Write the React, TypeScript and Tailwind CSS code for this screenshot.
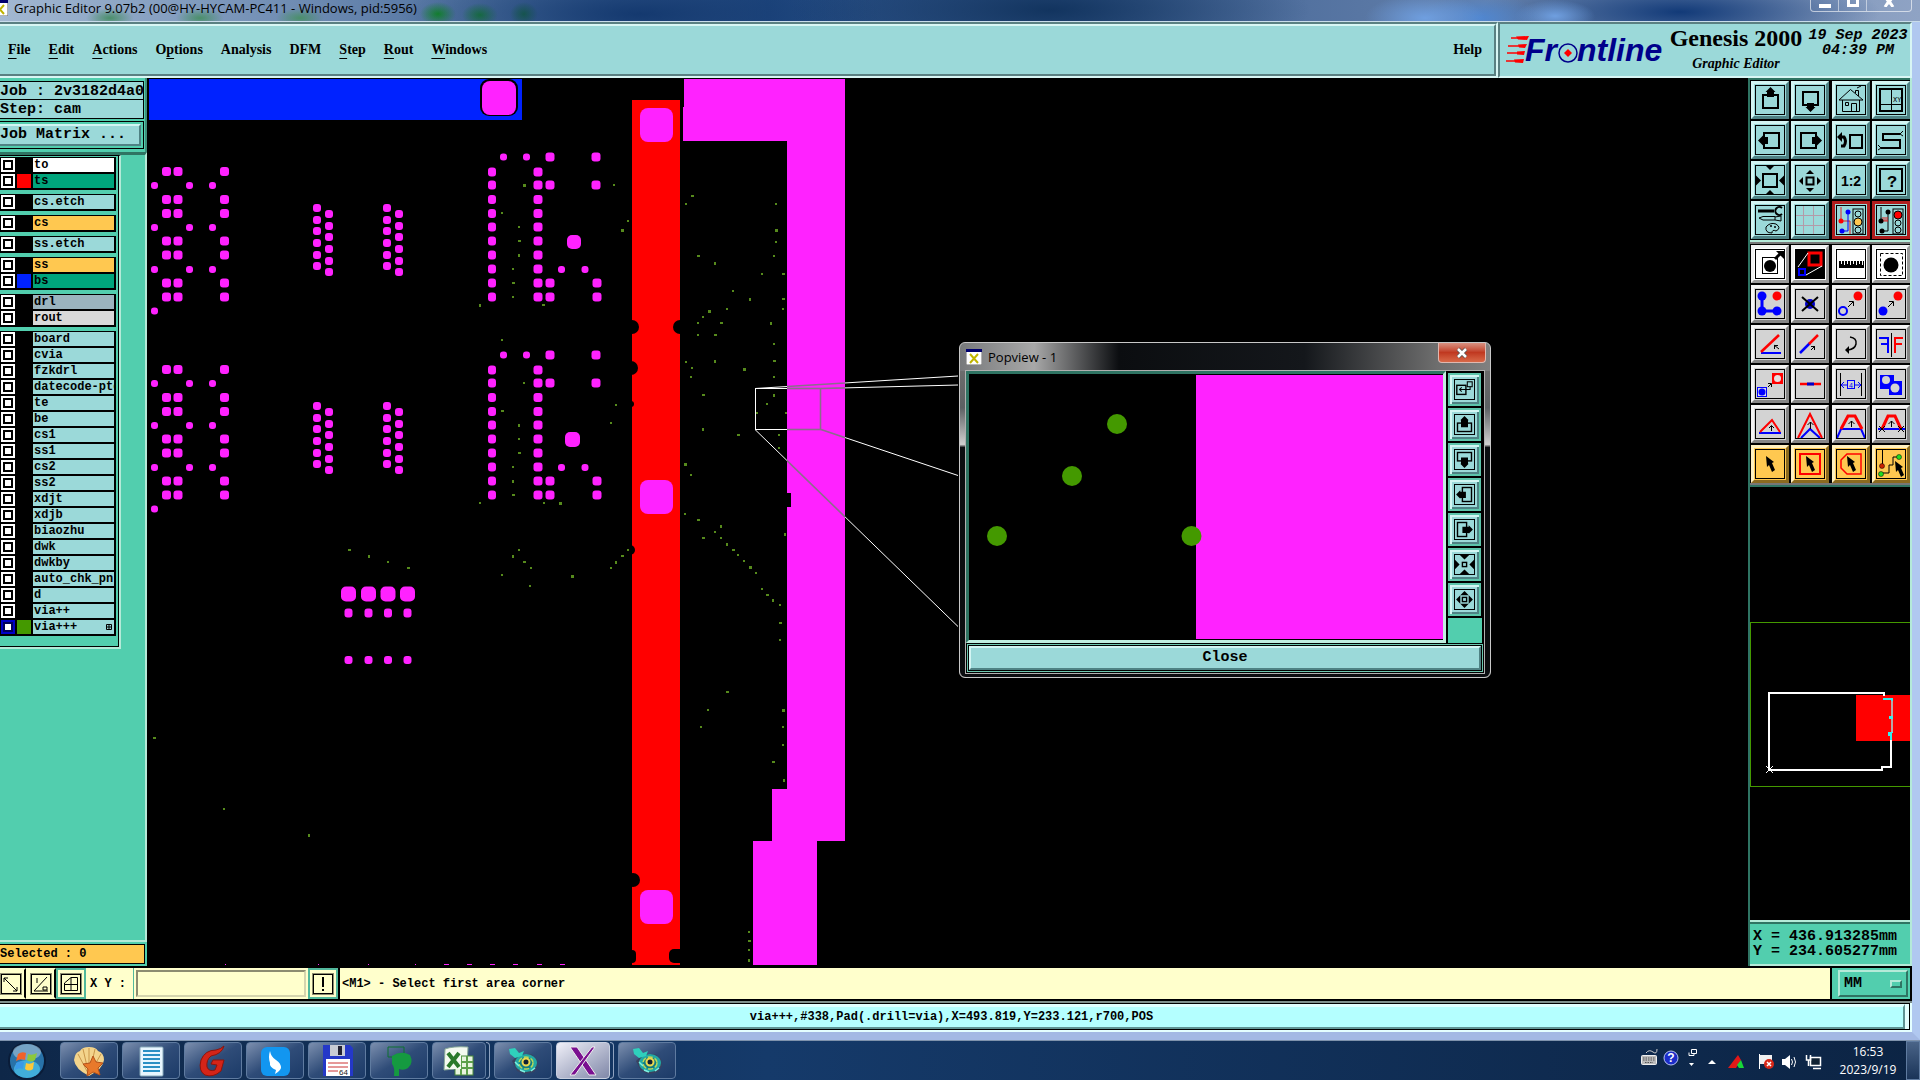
import React from "react";

const MONO = "font-['Liberation_Mono',monospace]";
const SERIF = "font-['Liberation_Serif',serif]";

/* ---------- board canvas data ---------- */
const ROWS_LARGE = [171.5, 199.5, 213.5, 241, 255, 283, 297];
const ROWS_SMALL = [185, 227, 269];
const ROWS_COLUMN = [172, 185, 199.5, 213.5, 227, 241, 255, 269, 283, 297];
const PADS_A = [208, 220, 231, 243, 255, 266];
const PADS_B = [214, 226, 237, 249, 261, 272];

const VIAS: number[][] = [
  [524, 185], [502, 213], [519, 227], [519, 241], [519, 255], [513, 269], [513, 283], [513, 297], [480, 305], [543, 305],
  [614, 185], [628, 221], [622, 230], [502, 340], [524, 383], [502, 411], [519, 425], [519, 439], [519, 453], [513, 467],
  [513, 481], [513, 495], [480, 503], [544, 503], [560, 503], [616, 405], [611, 423], [349, 550], [369, 556], [388, 562],
  [408, 568], [519, 550], [513, 556], [524, 562], [531, 568], [502, 575], [572, 576], [530, 586], [628, 550], [622, 556],
  [616, 562], [611, 568], [154, 738], [224, 809], [309, 835],
  [692, 196], [686, 204], [776, 204], [776, 230], [776, 242], [774, 256], [698, 256], [715, 263], [762, 274], [783, 274],
  [733, 291], [750, 299], [783, 299], [783, 309], [727, 309], [709, 311], [703, 317], [698, 323], [721, 323], [771, 323],
  [698, 335], [715, 335], [774, 344], [715, 361], [774, 361], [686, 362], [692, 368], [744, 369], [691, 377], [774, 377],
  [703, 395], [774, 395], [767, 404], [756, 413], [786, 413], [703, 429], [738, 435], [779, 435], [779, 448], [685, 464],
  [691, 475], [685, 514], [698, 520], [721, 526], [715, 532], [703, 538], [721, 538], [727, 544], [733, 550], [738, 555],
  [744, 561], [750, 567], [756, 573], [762, 589], [767, 595], [773, 600], [780, 605], [780, 623], [780, 640], [785, 534],
  [727, 692], [708, 710], [701, 727], [783, 710], [783, 727], [783, 745], [773, 762], [784, 780], [749, 932], [749, 941],
  [749, 950], [749, 960],
];

function Pad({ x, y, w, h, r }: { x: number; y: number; w: number; h: number; r: number }) {
  return <rect x={x - w / 2} y={y - h / 2} width={w} height={h} rx={r} fill="#ff22ff" />;
}

function PadBlock() {
  return (
    <>
      {[166.5, 178, 224.5].map((x) => ROWS_LARGE.map((y) => <Pad key={x + "-" + y} x={x} y={y} w={9} h={9} r={3} />))}
      {[154.5, 189.5, 212.5].map((x) => ROWS_SMALL.map((y) => <Pad key={x + "-" + y} x={x} y={y + 0.5} w={7} h={7} r={3} />))}
      <Pad x={154.5} y={311} w={7} h={7} r={3} />
      {[317, 387].map((x) => PADS_A.map((y) => <Pad key={x + "-" + y} x={x} y={y} w={8} h={8} r={3} />))}
      {[329, 399].map((x) => PADS_B.map((y) => <Pad key={x + "-" + y} x={x} y={y} w={8} h={8} r={3} />))}
      {[492, 538].map((x) => ROWS_COLUMN.map((y) => <Pad key={x + "-" + y} x={x} y={y} w={x === 492 ? 8 : 9} h={9} r={3} />))}
      {[[550, 157], [550, 185], [550, 283], [550, 297], [596, 157], [596, 185], [597, 283], [597, 297]].map(([x, y]) => (
        <Pad key={x + "-" + y} x={x} y={y} w={9} h={9} r={3} />
      ))}
      {[[503.5, 157], [526.5, 157], [561.5, 269.5], [585, 269.5]].map(([x, y]) => (
        <Pad key={x + "-" + y} x={x} y={y} w={7} h={7} r={3} />
      ))}
    </>
  );
}

function Leads({ color, width }: { color: string; width: number }) {
  return (
    <g fill="none" stroke={color} strokeWidth={width}>
      <rect x="755.5" y="388.5" width="65" height="41" />
      <path d="M755 388.5 L958 376 M821 388.5 L958 385 M821 429.5 L958 475.5 M755 429.5 L958 626.5" />
    </g>
  );
}

function BoardCanvas() {
  return (
    <svg viewBox="147 78 1602 887" width="1602" height="887" className="block max-w-none" aria-label="Board view">
      <rect x="149" y="79" width="373" height="41" fill="#0022ff" />
      <rect x="480" y="79" width="38" height="37" rx="9" fill="#000" />
      <rect x="482" y="81" width="34" height="34" rx="8" fill="#ff22ff" />
      <PadBlock />
      <g transform="translate(0 198)"><PadBlock /></g>
      <Pad x={574} y={242} w={14} h={14} r={5} />
      <Pad x={572.5} y={439.5} w={15} h={15} r={5} />
      {[348.5, 368.5, 388, 407.5].map((x) => (
        <g key={x}>
          <Pad x={x} y={594} w={15} h={15} r={5} />
          <Pad x={x} y={613} w={8} h={9} r={3} />
          <Pad x={x} y={660} w={8} h={8} r={3} />
        </g>
      ))}
      <rect x="632" y="100" width="48" height="865" fill="#f00" />
      {[108, 480, 890].map((y) => <rect key={y} x="640" y={y} width="33" height="34" rx="8" fill="#ff22ff" />)}
      <g fill="#000">
        <circle cx="632" cy="327" r="7" /><circle cx="680" cy="327" r="7" /><circle cx="631" cy="368" r="7" />
        <circle cx="631" cy="404" r="3" /><circle cx="630" cy="550" r="5" /><circle cx="633" cy="880" r="7" />
        <rect x="626" y="950" width="10" height="13" rx="4" /><rect x="669" y="949" width="18" height="14" rx="5" />
      </g>
      <path d="M684 79H845V841H817V965H753V841H772V789H787V507H791V493H787V141H683V107H684Z" fill="#ff22ff" />
      {VIAS.map(([x, y], i) => <rect key={i} x={x - 1} y={y - 1} width={i % 3 === 0 ? 3 : 2} height={i % 4 === 0 ? 3 : 2} fill="#568a1c" />)}
      {[225, 318, 368, 415].map((x) => <rect key={x} x={x} y="964" width="1" height="1" fill="#ff22ff" />)}
      {[444, 467, 490, 513, 537, 560].map((x) => <rect key={x} x={x} y="964" width="5" height="1" fill="#ff22ff" />)}
      <clipPath id="onCopper"><path d="M787 79H845V841H787V507H791V493H787Z" /></clipPath>
      <Leads color="#fff" width={1} />
      <g clipPath="url(#onCopper)">
        <Leads color="#ff22ff" width={3} />
        <Leads color="#8c6c8c" width={1.6} />
      </g>
    </svg>
  );
}

/* ---------- tool icons, drawn on a 30 x 30 grid ---------- */
const up = (x: number, y: number, s: number) => `M${x} ${y}l${s} ${s}h${-2 * s}z`;
const down = (x: number, y: number, s: number) => `M${x} ${y}l${s} ${-s}h${-2 * s}z`;
const left = (x: number, y: number, s: number) => `M${x} ${y}l${s} ${-s}v${2 * s}z`;
const right = (x: number, y: number, s: number) => `M${x} ${y}l${-s} ${-s}v${2 * s}z`;

const Box = ({ x, y, w, h, sw = 2 }: { x: number; y: number; w: number; h: number; sw?: number }) => (
  <rect x={x} y={y} width={w} height={h} fill="none" stroke="#000" strokeWidth={sw} />
);
const Cursor = ({ x, y }: { x: number; y: number }) => (
  <path transform={`translate(${x} ${y})`} d="M0 0L8 6L6 7L9 14L6 16L3 9L1 11Z" fill="#000" />
);
const SmallArrow = ({ d, a }: { d: string; a: string }) => (
  <><path d={d} stroke="#000" fill="none" /><path d={a} stroke="#000" fill="none" /></>
);

type Tool = { name: string; art: React.ReactNode };

const viewTools: Tool[] = [
  { name: "Pan up", art: <><Box x={8} y={10} w={15} h={13} /><path d={up(15.5, 2, 5) + "M12 7h7v5h-7z"} /></> },
  { name: "Pan down", art: <><Box x={8} y={7} w={15} h={13} /><path d={down(15.5, 27, 5) + "M12 18h7v4h-7z"} /></> },
  { name: "Home", art: <g fill="none" stroke="#000"><path d="M3 15L14.500 4.500L27 15H3M6.500 15V26.500H23.500V15M19.500 8V5.500H22.500V11M21 3L25 1M9.500 17.500h3v3h-3zM15.500 26V18.500H20.500V26" /></g> },
  { name: "Zoom XY", art: <><Box x={4} y={4} w={22} h={22} /><path d="M15.500 4V26M4 19.500H26" stroke="#000" /><text x="17" y="17" fontSize="7" fontFamily="Liberation Mono">XY</text></> },
  { name: "Pan left", art: <><Box x={9} y={8} w={15} h={15} /><path d={left(3, 15.5, 5) + "M8 12h5v7h-5z"} /></> },
  { name: "Pan right", art: <><Box x={6} y={8} w={15} h={15} /><path d={right(27, 15.5, 5) + "M17 12h5v7h-5z"} /></> },
  { name: "Previous view", art: <><Box x={14} y={10} w={12} h={13} /><path d="M5 12H8Q11 16 8 21H5" fill="none" stroke="#000" strokeWidth="3" /><path d={left(1, 12, 5)} /></> },
  { name: "Serpentine", art: <><path d="M24 9H7V15H24V23H5" fill="none" stroke="#000" strokeWidth="2" /><path d="M24 9l3-3M24 9l3 2M5 23l-3-3M5 23l-3 2" stroke="#000" /></> },
  { name: "Zoom in", art: <><Box x={8} y={9} w={14} h={13} /><path d={down(15, 5, 4) + up(15, 25, 4) + right(6, 15.5, 5) + left(24, 15.5, 5)} /></> },
  { name: "Zoom out", art: <><Box x={11.5} y={12.5} w={7} h={7} /><path d={up(15, 5, 4) + down(15, 27, 4) + left(4, 16, 4) + right(26, 16, 4)} /></> },
  { name: "Scale one to two", art: <text x="15" y="21" textAnchor="middle" fontSize="14" fontWeight="bold" fontFamily="Liberation Sans">1:2</text> },
  { name: "Query", art: <><Box x={4} y={4} w={22} h={22} /><text x="16" y="22" textAnchor="middle" fontSize="17" fontWeight="bold" fontFamily="Liberation Mono">?</text></> },
  { name: "Options", art: <g><path d="M3 6H19" stroke="#000" strokeWidth="3" /><path d="M27 3A4 4 0 1 0 27 9" fill="none" stroke="#000" strokeWidth="2" /><path d="M4 13L8 11.500H20V15H8ZM20 12l6-1v5l-6-1" fill="none" stroke="#000" /><path d="M11 22Q15 17 21 19Q27 23 21 26Q17 24 17 28Q10 28 11 22Z" fill="none" stroke="#000" /><circle cx="16" cy="21" r="1" /><circle cx="20" cy="22" r="1" /></g> },
  { name: "Grid", art: <path d="M8.500 1V29M18.500 1V29M1 10.500H29M1 20.500H29" stroke="#b39aa8" /> },
  { name: "Net warnings", art: <g><path d="M5 2V16H14V29" stroke="#d22" fill="none" /><path d="M12 7V26H6" stroke="#00f" fill="none" /><circle cx="5" cy="16" r="2.500" fill="#f00" /><circle cx="12" cy="7" r="2.500" fill="#00f" /><circle cx="6" cy="26" r="2.500" fill="#00f" /><rect x="17" y="4" width="10" height="25" fill="none" stroke="#000" /><circle cx="22" cy="9" r="3" fill="#9bd9d9" stroke="#000" /><circle cx="22" cy="17" r="4" fill="#ffc850" stroke="#000" /><circle cx="22" cy="25" r="3" fill="#9bd9d9" stroke="#000" /></g> },
  { name: "Net errors", art: <g><path d="M5 2V16M12 7V26H6" stroke="#000" fill="none" /><path d="M5 16H12M7 12v4M9 12v4M11 12v4" stroke="#d22" /><circle cx="5" cy="16" r="2.500" /><circle cx="12" cy="7" r="2.500" /><circle cx="6" cy="26" r="2.500" /><rect x="17" y="4" width="10" height="25" fill="none" stroke="#000" /><circle cx="22" cy="10" r="4" fill="#f00" stroke="#000" /><circle cx="22" cy="18" r="3" fill="#9bd9d9" stroke="#000" /><circle cx="22" cy="25" r="3" fill="#9bd9d9" stroke="#000" /></g> },
];

const whiteTools: Tool[] = [
  { name: "Snap", art: <><Box x={7.5} y={8.5} w={15} h={16} sw={1} /><circle cx="15" cy="17" r="6" /><path d="M20 10L25 5" stroke="#000" strokeWidth="3" /><path d="M21 2H29V10Z" /></> },
  { name: "Popview", art: <><rect width="30" height="30" /><rect x="14" y="4" width="12" height="12" fill="none" stroke="#f00" strokeWidth="3" /><rect x="4" y="20" width="6" height="6" fill="none" stroke="#00f" strokeWidth="2" /><path d="M3 18L13 4M11 26L27 17" stroke="#fff" /></> },
  { name: "Measure", art: <><rect x="3" y="12" width="25" height="7" /><path d="M5.500 12v3M8.500 12v4M11.500 12v3M14.500 12v4M17.500 12v3M20.500 12v4M23.500 12v3M26.500 12v4" stroke="#fff" /></> },
  { name: "Highlight", art: <><rect x="4.500" y="4.500" width="22" height="22" fill="none" stroke="#000" strokeDasharray="3 2" /><circle cx="15" cy="16" r="7.500" /></> },
];

const editTools: Tool[] = [
  { name: "Add feature", art: <><path d="M7 7V22H22" fill="none" stroke="#00f" strokeWidth="3" /><circle cx="7" cy="7" r="4.500" fill="#00f" /><circle cx="7" cy="22" r="4.500" fill="#00f" /><circle cx="22" cy="22" r="4.500" fill="#00f" /><circle cx="22" cy="7" r="4.500" fill="#f00" /></> },
  { name: "Delete", art: <><circle cx="15" cy="15" r="5" fill="#00c" /><path d="M7 8L23 22M7 22L23 8" stroke="#000" strokeWidth="2" /></> },
  { name: "Move", art: <><circle cx="7" cy="22" r="4" fill="none" stroke="#00f" strokeWidth="2" /><circle cx="22" cy="7" r="4.500" fill="#f00" /><SmallArrow d="M12 18L17 13" a="M13 12.500H17.500V17" /></> },
  { name: "Copy", art: <><circle cx="7" cy="22" r="4.500" fill="#00f" /><circle cx="22" cy="7" r="4.500" fill="#f00" /><SmallArrow d="M12 18L17 13" a="M13 12.500H17.500V17" /></> },
  { name: "Rotate line", art: <><path d="M6 24H26" stroke="#00f" strokeWidth="2" /><path d="M6 23L24 6" stroke="#f00" strokeWidth="2.500" /><SmallArrow d="M19 16L24 20" a="M19.500 20V16.500H23" /></> },
  { name: "Stretch line", art: <><path d="M5 24L15 14" stroke="#00f" strokeWidth="2.500" /><path d="M14 15L23 6" stroke="#f00" strokeWidth="2.500" /><SmallArrow d="M16 21L20 17" a="M16 17.500H19.500V21" /></> },
  { name: "Rotate", art: <><path d="M14 8Q21 9 20 15Q19 20 12 21" fill="none" stroke="#000" strokeWidth="1.500" /><path d={left(9, 21, 4)} /></> },
  { name: "Mirror", art: <><path d="M3 9H12V24M12 15H5" fill="none" stroke="#00f" strokeWidth="2" /><path d="M15.500 4V28" stroke="#000" /><path d="M27 9H19V24M19 15H26" fill="none" stroke="#f00" strokeWidth="2" /></> },
  { name: "Resize", art: <><rect x="18" y="5" width="9" height="9" fill="#f00" stroke="#f00" strokeWidth="2" /><circle cx="22.500" cy="9.500" r="3.500" fill="#e8e0e0" /><rect x="2.500" y="18.500" width="9" height="9" fill="#d8d8e8" stroke="#00f" /><circle cx="7" cy="23" r="3.500" fill="#00f" /><SmallArrow d="M13 18L16 15" a="M13 14.500H16.500V18" /></> },
  { name: "Join", art: <><path d="M5 15H26" stroke="#f00" strokeWidth="2.500" /><path d="M12 15H19" stroke="#00c" strokeWidth="3" /></> },
  { name: "Spacing", art: <><path d="M4.500 4V27M25.500 4V27" stroke="#000" /><rect x="11.500" y="11.500" width="7" height="8" fill="none" stroke="#00f" /><text x="13" y="18.500" fontSize="7" fill="#00f" fontFamily="Liberation Sans">4</text><path d="M5 16H11M19 16H25M8 13l-3 3l3 3M22 13l3 3l-3 3" fill="none" stroke="#00f" /></> },
  { name: "Merge", art: <><rect x="4" y="6" width="14" height="14" fill="#00f" /><rect x="13" y="12" width="13" height="14" fill="#00f" /><circle cx="10" cy="11" r="4" fill="#d3d3d3" /><circle cx="19" cy="19" r="4.500" fill="#d3d3d3" /></> },
  { name: "Triangle", art: <><path d="M4 24H26" stroke="#00f" strokeWidth="2" /><path d="M5 23L17 11L25 23" fill="none" stroke="#f00" strokeWidth="2" /><SmallArrow d="M16.500 22V17" a="M14 19l2.500-2.500l2.500 2.500" /></> },
  { name: "Move corner", art: <><path d="M6 29L15 20L25 29" fill="none" stroke="#00f" strokeWidth="2" /><path d="M3 29L15 5L27 29" fill="none" stroke="#f00" strokeWidth="2" /><SmallArrow d="M15.500 20V13" a="M12.500 16l3-3l3 3" /></> },
  { name: "Move edge", art: <><path d="M1 29L5 20H25L29 29" fill="none" stroke="#00f" strokeWidth="2" /><path d="M5 20L12 7H19L26 20" fill="none" stroke="#f00" strokeWidth="3" /><SmallArrow d="M15.500 18V12" a="M12.500 15l3-3l3 3" /></> },
  { name: "Move edge fixed", art: <><path d="M2 20H29" stroke="#00f" strokeWidth="2" /><path d="M6 20L12 7H19L25 20" fill="none" stroke="#f00" strokeWidth="3" /><path d="M3 17l6 6M3 23l6-6M22 17l6 6M22 23l6-6" stroke="#000" /><SmallArrow d="M15.500 18V12" a="M12.500 15l3-3l3 3" /></> },
];

const selectTools: Tool[] = [
  { name: "Select", art: <Cursor x={11} y={7} /> },
  { name: "Select rectangle", art: <><rect x="5" y="5" width="20" height="20" fill="none" stroke="#f00" strokeWidth="2" /><Cursor x={11} y={7} /></> },
  { name: "Select polygon", art: <><path d="M11 5H25V25H11L5 19V11Z" fill="none" stroke="#f00" strokeWidth="1.500" /><Cursor x={11} y={7} /></> },
  { name: "Select net", art: <><path d="M6.500 1V15M6 24H13V16H17V8H22" fill="none" stroke="#000" /><circle cx="6" cy="17" r="2.500" fill="#c20" stroke="#000" strokeWidth=".5" /><circle cx="5" cy="25" r="2.500" fill="#2d2" stroke="#000" strokeWidth=".5" /><circle cx="23" cy="8" r="2.500" fill="#2d2" stroke="#000" strokeWidth=".5" /><Cursor x={19} y={12} /></> },
];

const popTools: Tool[] = [
  { name: "Set area", art: <g fill="none" stroke="#000" strokeWidth="2"><rect x="4" y="9" width="13" height="13" /><rect x="19" y="4" width="7" height="7" strokeWidth="1.500" /><path d="M23 11V15H8M11 12l-3 3l3 3" strokeWidth="1.500" /></g> },
  { name: "Pan up", art: <><Box x={5} y={13} w={20} h={12} /><path d={up(15, 3, 6) + "M10 9h10v10h-10z"} /></> },
  { name: "Pan down", art: <><Box x={5} y={5} w={20} h={12} /><path d={down(15, 27, 6) + "M10 12h10v9h-10z"} /></> },
  { name: "Pan left", art: <><Box x={12} y={5} w={13} h={20} /><path d={left(3, 15, 6) + "M9 11h8v9h-8z"} /></> },
  { name: "Pan right", art: <><Box x={5} y={5} w={13} h={20} /><path d={right(27, 15, 6) + "M12 11h9v9h-9z"} /></> },
  { name: "Zoom in", art: <><Box x={12} y={12} w={6} h={6} /><path d={down(15, 8, 7) + up(15, 22, 7) + right(8, 15, 7) + left(22, 15, 7)} /></> },
  { name: "Zoom out", art: <><Box x={12} y={12} w={6} h={6} /><path d={up(15, 3, 6) + down(15, 27, 6) + left(3, 15, 6) + right(27, 15, 6)} /></> },
];

const TONES = {
  teal: "bg-[#9bd9d9] border-t-[#d3f5f3] border-l-[#d3f5f3] border-b-[#4f8284] border-r-[#4f8284]",
  alert: "bg-[#9bd9d9] border-[#b01e1e]",
  white: "bg-white border-t-[#f2f2f2] border-l-[#f2f2f2] border-b-[#9a9a9a] border-r-[#9a9a9a]",
  grey: "bg-[#d3d3d3] border-t-[#f4f4f4] border-l-[#f4f4f4] border-b-[#858585] border-r-[#858585]",
  amber: "bg-[#ffc850] border-t-[#fff0c0] border-l-[#fff0c0] border-b-[#8a6a20] border-r-[#8a6a20]",
};

function ToolButton({ tool, tone }: { tool: Tool; tone: keyof typeof TONES }) {
  return (
    <button aria-label={tool.name} className={`size-[38px] border-[3px] p-px ${TONES[tone]}`}>
      <svg viewBox="0 0 30 30" className="block size-[30px]">
        {tool.art}
        <rect x=".5" y=".5" width="29" height="29" fill="none" stroke="#000" />
      </svg>
    </button>
  );
}

/* ---------- header ---------- */
function XIcon({ className }: { className: string }) {
  return (
    <svg viewBox="0 0 16 16" className={className}>
      <rect width="16" height="16" fill="#fff" stroke="#666" /><rect width="16" height="3" fill="#00006e" />
      <path d="M4 5L12 14M12 5L4 14" stroke="#c0b400" strokeWidth="2" />
    </svg>
  );
}

function TitleBar() {
  return (
    <div className="relative flex h-[22px] shrink-0 items-start justify-between overflow-hidden border-b border-[#c9dcea] bg-linear-to-r from-[#a3b8d2] via-[#1f4880] via-40% to-[#8fa3c4]">
      <div className="absolute inset-0 bg-[radial-gradient(ellipse_60px_24px_at_1425px_18px,#6f9fe0,transparent),radial-gradient(ellipse_60px_24px_at_1480px_18px,#4f86d0,transparent),radial-gradient(ellipse_40px_16px_at_1555px_16px,#6f9fe0,transparent),radial-gradient(ellipse_260px_60px_at_1050px_10px,#12345f,transparent),radial-gradient(ellipse_200px_40px_at_1680px_12px,#123a78,transparent),radial-gradient(ellipse_240px_50px_at_640px_14px,#14396f,transparent),radial-gradient(ellipse_18px_12px_at_438px_14px,#128a22,transparent),radial-gradient(ellipse_18px_12px_at_480px_15px,#17802a,transparent),radial-gradient(ellipse_14px_12px_at_524px_14px,#17702a,transparent),radial-gradient(ellipse_24px_10px_at_110px_18px,#4a8f6a,transparent),radial-gradient(ellipse_24px_10px_at_200px_18px,#4a8f6a,transparent),radial-gradient(ellipse_24px_10px_at_300px_18px,#4a8f6a,transparent)]" />
      <div className="relative flex h-4 items-center gap-1.5">
        <XIcon className="-ml-2 size-4" />
        <h1 className="whitespace-nowrap font-['Open_Sans',sans-serif] text-[13px] leading-4 text-black">
          Graphic Editor 9.07b2 (00@HY-HYCAM-PC411 - Windows, pid:5956)
        </h1>
      </div>
      <div className="relative mr-2 flex h-3 rounded-b border border-t-0 border-white/60 text-white">
        <button aria-label="Minimize" className="flex w-7 items-center justify-center border-r border-white/50"><span className="h-1 w-3 bg-white" /></button>
        <button aria-label="Maximize" className="flex w-7 items-start justify-center border-r border-white/50"><span className="h-[7px] w-3 border-[3px] border-t-0 border-white" /></button>
        <button aria-label="Close window" className="flex w-11 items-start justify-center">
          <svg viewBox="0 0 12 7" className="h-[7px] w-3"><path d="M2 7L6 1L10 7M3 -2L6 2L9 -2" stroke="#fff" strokeWidth="3" fill="none" /></svg>
        </button>
      </div>
    </div>
  );
}

const MENUS: [string, string, string][] = [
  ["", "F", "ile"], ["", "E", "dit"], ["", "A", "ctions"], ["O", "p", "tions"], ["Analysis", "", ""], ["DFM", "", ""],
  ["", "S", "tep"], ["", "R", "out"], ["", "W", "indows"],
];

function Header() {
  return (
    <header className="flex shrink-0 bg-[#9bd9d9]">
      <div className="flex-1 border-2 border-l-0 border-t-[#5a8082] border-r-[#d8f6f4] border-b-[#d8f6f4]">
        <nav className={`flex h-[52px] items-center border-2 border-l-0 border-t-[#d8f6f4] border-r-[#5a8082] border-b-[#5a8082] pl-2 pr-3 text-sm font-bold ${SERIF}`}>
          <div className="flex flex-1 gap-[18px]">
            {MENUS.map(([a, u, b]) => (
              <button key={a + u + b} className="leading-5">
                {a}{u && <span className="underline underline-offset-4">{u}</span>}{b}
              </button>
            ))}
          </div>
          <button>Help</button>
        </nav>
      </div>
      <div className="flex w-[414px] border-2 border-t-[#5a8082] border-l-[#5a8082] border-r-[#d8f6f4] border-b-[#d8f6f4] pl-1.5">
        <svg viewBox="0 0 160 36" className="mt-2 h-9 w-[160px] shrink-0" role="img" aria-label="Frontline">
          <path d="M5 6H20M2 14H18M1 21H17M0 29H15" stroke="#f00" strokeWidth="1.500" />
          <path d="M10 4.500L23 4L21 8L12 7.500ZM12 12.500L21 12L19 16L13 15.500ZM11 19.500L19 19L18 23L11 22.500ZM8 27.500L18 27L17 31L9 30.500Z" fill="#f00" />
          <text x="19" y="29" fontSize="32" fontWeight="bold" fontStyle="italic" fontFamily="Liberation Sans" fill="#00008b">Fr</text>
          <circle cx="62" cy="21" r="9" fill="none" stroke="#00008b" strokeWidth="1.500" />
          <path d="M62 17L66 21L62 25L58 21Z" fill="#f00" />
          <text x="71" y="29" fontSize="32" fontWeight="bold" fontStyle="italic" fontFamily="Liberation Sans" fill="#00008b">ntline</text>
        </svg>
        <div className={`flex w-[140px] shrink-0 flex-col items-center font-bold ${SERIF}`}>
          <span className="whitespace-nowrap text-2xl leading-7">Genesis 2000</span>
          <span className="text-sm italic leading-6">Graphic Editor</span>
        </div>
        <div className={`flex-1 whitespace-nowrap pt-1 text-center text-[15px] font-bold italic leading-[15px] ${MONO}`}>
          19 Sep 2023<br />04:39 PM
        </div>
      </div>
    </header>
  );
}

/* ---------- left side ---------- */
type Layer = { name: string; bg: string; swatch?: string; active?: boolean };
const T = "bg-[#9bd9d9]";
const GROUPS: Layer[][] = [
  [{ name: "to", bg: "bg-white" }, { name: "ts", bg: "bg-[#00a57c]", swatch: "bg-[#ff0000]" }],
  [{ name: "cs.etch", bg: T }],
  [{ name: "cs", bg: "bg-[#ffc850]" }],
  [{ name: "ss.etch", bg: T }],
  [{ name: "ss", bg: "bg-[#ffc850]" }, { name: "bs", bg: "bg-[#00a57c]", swatch: "bg-[#0022ff]" }],
  [{ name: "drl", bg: "bg-[#9bb4be]" }, { name: "rout", bg: "bg-[#d9d9d9]" }],
  [
    ...["board", "cvia", "fzkdrl", "datecode-pte", "te", "be", "cs1", "ss1", "cs2", "ss2", "xdjt", "xdjb", "biaozhu", "dwk", "dwkby", "auto_chk_pnl", "d", "via++"].map((name) => ({ name, bg: T })),
    { name: "via+++", bg: T, swatch: "bg-[#449900]", active: true },
  ],
];

function LayerRow({ layer }: { layer: Layer }) {
  return (
    <label className="flex h-4 items-center gap-0.5 pl-px pr-0.5">
      <input
        type="checkbox"
        className={`size-3.5 shrink-0 appearance-none border-2 bg-white ${layer.active ? "border-[#0000c8] shadow-[inset_0_0_0_2px_#00005a]" : "border-white shadow-[inset_0_0_0_2px_#000]"}`}
      />
      <span className={`size-3.5 shrink-0 ${layer.swatch ?? "bg-black"}`} />
      <span className={`flex h-3.5 min-w-0 flex-1 items-center overflow-hidden whitespace-nowrap pl-px text-xs font-bold leading-3 ${layer.bg}`}>
        <span className="flex-1">{layer.name}</span>
        {layer.active && (
          <svg viewBox="0 0 7 7" className="mr-px size-[7px] shrink-0"><path d="M.5 .5h5v5h-5zM3 0v6M0 3h6" fill="none" stroke="#000" /></svg>
        )}
      </span>
    </label>
  );
}

function Sidebar() {
  return (
    <aside className={`flex w-[147px] shrink-0 flex-col bg-[#52ceae] text-black ${MONO}`}>
      <div className="border-r-2 border-[#3f8f7c] pt-[3px] pb-[3px]">
        <div className="mr-px flex h-[19px] items-center overflow-hidden whitespace-nowrap border border-l-0 border-black bg-[#9bd9d9] pt-0.5 text-[15px] font-bold leading-4">Job : 2v3182d4a0</div>
        <div className="mr-px flex h-[19px] items-center border border-t-0 border-l-0 border-black bg-[#9bd9d9] pt-0.5 text-[15px] font-bold leading-4">Step: cam</div>
        <div className="mr-px mt-0.5 border border-l-0 border-black py-0.5 pr-0.5">
          <button className="block h-[22px] w-full border-2 border-l-0 border-t-[#d3f5f3] border-r-[#4f8284] border-b-[#4f8284] bg-[#9bd9d9] text-left text-[15px] font-bold leading-[18px]">Job Matrix ...</button>
        </div>
      </div>
      <div className="flex-1 border-t-[3px] border-r-2 border-b-2 border-t-[#2f7463] border-r-[#b4ead8] border-b-[#b4ead8]">
        <div className="flex w-[121px] flex-col gap-1 border-t border-r-2 border-b-2 border-t-black border-r-[#b4ead8] border-b-[#b4ead8]">
          <div className="flex flex-col gap-1 border-r border-b border-black pt-px pr-0.5 pb-2.5">
            {GROUPS.map((g) => (
              <div key={g[0].name} className="bg-black pb-px">
                {g.map((l) => <LayerRow key={l.name} layer={l} />)}
              </div>
            ))}
          </div>
        </div>
      </div>
      <div className="my-0.5 mr-0.5 flex h-5 items-center border border-l-0 border-black bg-[#ffc850] text-xs font-bold">Selected : 0</div>
    </aside>
  );
}

/* ---------- right side ---------- */
function ToolGrid({ tools, tone }: { tools: Tool[]; tone: keyof typeof TONES }) {
  return (
    <>
      {tools.map((t, i) => <ToolButton key={t.name + i} tool={t} tone={tone === "teal" && i > 13 ? "alert" : tone} />)}
    </>
  );
}

function RightPanel() {
  return (
    <aside className="flex w-[164px] shrink-0 flex-col border-l-2 border-r-2 border-l-[#2f7463] border-r-[#b4ead8] bg-black">
      <div className="grid grid-cols-4 gap-0.5 border-t-2 border-[#2f7463] pt-px pl-px"><ToolGrid tools={viewTools} tone="teal" /></div>
      <div className="mt-px border-t-2 border-[#b4ead8]" />
      <div className="grid grid-cols-4 gap-0.5 border-t-2 border-[#777] pl-px pt-px"><ToolGrid tools={whiteTools} tone="white" /><ToolGrid tools={editTools} tone="grey" /><ToolGrid tools={selectTools} tone="amber" /></div>
      <div className="border-t-2 border-b-2 border-t-[#777] border-b-[#2f7463]" />
      <div className="min-h-0 flex-1 overflow-hidden">
        <svg viewBox="1750 487 160 432" width="160" height="432" aria-label="Overview">
          <rect x="1750.500" y="622.500" width="165" height="164" fill="none" stroke="#449900" />
          <rect x="1856" y="695" width="54" height="46" fill="#f00" />
          <path d="M1884 693H1769V770H1882V767H1891V740" fill="none" stroke="#fff" strokeWidth="2" />
          <path d="M1884 692V696" stroke="#fff" strokeWidth="2" />
          <path d="M1883 699H1892V733" fill="none" stroke="#3ee" strokeWidth="2" />
          <path d="M1892 701V732" stroke="#b8a8a8" strokeWidth="2" />
          <path d="M1889 716h4v3h-4zM1888 732h4v4h-4zM1890 735h2v5h-2z" fill="#3ee" />
          <path d="M1766 766l7 7M1773 766l-7 7" stroke="#fff" />
        </svg>
      </div>
      <div className={`border-t-2 border-b-2 border-[#b4ead8] bg-[#52ceae] text-[15px] font-bold leading-[15px] ${MONO}`}>
        <div className="whitespace-nowrap border-t-2 border-[#2f7463] py-[5px] pl-[3px]">X = 436.913285mm<br />Y = 234.605277mm</div>
      </div>
    </aside>
  );
}

function Popview() {
  return (
    <section className="absolute left-[812px] top-[264px] flex w-[532px] flex-col rounded-md border border-[#c8c8c8] bg-[linear-gradient(90deg,#77797b,#a8a8a8_14%,#0b0d10_30%,#14171b_65%,#6e6e6e_90%,#808080)]">
      <div className="absolute inset-x-0 bottom-0 top-7 rounded-b-md bg-[linear-gradient(#6c6c6c,#5c6063_12%,#d0d0d0_24%,#0b0d10_25%)]" />
      <div className="relative flex h-[27px] items-center pl-1.5">
        <XIcon className="size-4" />
        <h2 className="ml-1.5 flex-1 font-['Open_Sans',sans-serif] text-[13px] leading-4 text-black">Popview - 1</h2>
        <button aria-label="Close popview" className="mr-1 flex h-5 w-12 items-center justify-center self-start rounded-b border border-t-0 border-[#e0b8b0] bg-linear-to-b from-[#d89080] via-[#c03820] to-[#d86848]">
          <svg viewBox="0 0 12 12" className="size-3"><path d="M2 2L10 10M10 2L2 10" stroke="#555" strokeWidth="4" /><path d="M2 2L10 10M10 2L2 10" stroke="#fff" strokeWidth="2.500" /></svg>
        </button>
      </div>
      <div className="relative mx-[5px] mb-[3px] border border-[#b0b0b0] bg-black">
        <div className="flex gap-0.5 pr-0.5">
          <div className="h-[272px] flex-1 overflow-hidden border-[3px] border-t-[#2f7463] border-l-[#2f7463] border-r-[#c0eee0] border-b-[#c0eee0]">
            <svg viewBox="969 374 475 266" width="475" height="266" aria-label="Magnified view">
              <rect x="1196" y="375" width="247" height="264" fill="#ff22ff" />
              <g fill="#449900"><circle cx="1117" cy="424" r="10" /><circle cx="1072" cy="476" r="10" /><circle cx="997" cy="536" r="10" /><circle cx="1191.500" cy="536" r="10" /></g>
            </svg>
          </div>
          <div className="flex w-[34px] flex-col gap-0.5 bg-black pt-0.5">
            {popTools.map((t) => (
              <button key={t.name} aria-label={t.name} className="flex size-[33px] shrink-0 items-center justify-center border-2 border-[#5cc4aa] bg-[#9bd9d9] shadow-[inset_2px_2px_0_#d3f5f3,inset_-2px_-2px_0_#4f8284]">
                <svg viewBox="0 0 30 30" className="size-[21px]">{t.art}<rect x=".7" y=".7" width="28.600" height="28.600" fill="none" stroke="#000" strokeWidth="1.400" /></svg>
              </button>
            ))}
            <div className="flex-1 bg-[#52ceae]" />
          </div>
        </div>
        <div className="mx-px mb-px mt-px border border-[#6cc8b0] p-px">
          <button className={`block h-6 w-full border-2 border-t-[#d3f5f3] border-l-[#d3f5f3] border-r-[#4f8284] border-b-[#4f8284] bg-[#9bd9d9] text-center text-[15px] font-bold leading-5 text-black ${MONO}`}>Close</button>
        </div>
      </div>
    </section>
  );
}

/* ---------- command and status rows ---------- */
function SmallTool({ name, children, active }: { name: string; children: React.ReactNode; active?: boolean }) {
  return (
    <button aria-label={name} className={`flex h-full items-center justify-center border-2 px-[3px] ${active ? "border-[#52b89c] bg-[#ffffcc]" : "border-[#ffffcc] border-r-black bg-[#ffffcc]"}`}>
      <svg viewBox="0 0 20 20" className="size-5 outline outline-[#8c8c70]" fill="none" stroke="#000"><rect x=".5" y=".5" width="19" height="19" />{children}</svg>
    </button>
  );
}

function CommandRow() {
  return (
    <div className={`flex h-[35px] shrink-0 border-2 border-l-0 border-black bg-[#ffffcc] text-xs font-bold ${MONO}`}>
      <div className="-ml-1 flex shrink-0">
        <SmallTool name="Absolute"><path d="M3 4L16 17M3 8V4H7M12 17H16V13" /></SmallTool>
        <SmallTool name="Relative"><path d="M3 17L16 3M3 17H17M6 4v5M12 13h4v3h-4z" /></SmallTool>
        <SmallTool name="Snap" active><path d="M5 16.500H16.500V3.500H10L3.500 9V16.500H5M10 4V16M4 10.500H16" /></SmallTool>
      </div>
      <label htmlFor="xy" className="flex w-12 shrink-0 items-center whitespace-nowrap border-r border-[#52b89c] pl-1">X Y :</label>
      <input id="xy" className="my-0.5 ml-0.5 w-[170px] shrink-0 border-2 border-t-[#8c8c70] border-l-[#8c8c70] border-r-[#d5d5ae] border-b-[#d5d5ae] bg-[#ffffcc] px-1" defaultValue="" />
      <div className="ml-0.5 flex border-r-2 border-black"><SmallTool name="Message log" active><path d="M10 3V13M10 15V17" strokeWidth="2" /></SmallTool></div>
      <p className="flex flex-1 items-center pl-0.5">&lt;M1&gt; - Select first area corner</p>
      <div className="flex w-[80px] shrink-0 border-l-2 border-black bg-[#52ceae] p-0.5 pl-1.5">
        <div className="relative flex flex-1 items-center border-2 border-t-[#b4ead8] border-l-[#b4ead8] border-r-[#2f7463] border-b-[#2f7463]">
          <select aria-label="Units" className="h-full w-full appearance-none bg-transparent pl-1 text-[15px] font-bold"><option>MM</option><option>INCH</option></select>
          <span className="pointer-events-none absolute right-1 h-2 w-3 border-2 border-t-[#b4ead8] border-l-[#b4ead8] border-r-[#2f7463] border-b-[#2f7463]" />
        </div>
      </div>
    </div>
  );
}

function StatusBar() {
  return (
    <div className={`shrink-0 border-t-2 border-b-2 border-t-[#7f8f8c] border-b-[#e4ffff] bg-[#e4ffff] text-xs font-bold ${MONO}`}>
      <div className="mr-0.5 border border-l-0 border-black">
        <div className="mr-1 h-[25px] border-t-[3px] border-b-2 border-r-2 border-t-[#e0ffff] border-r-[#5f9494] border-b-[#5f9494] bg-[#b4ffff] text-center leading-5">
          via+++,#338,Pad(.drill=via),X=493.819,Y=233.121,r700,POS
        </div>
      </div>
    </div>
  );
}

/* ---------- taskbar ---------- */
const Gear = () => (
  <g>
    <path d="M5 16L9 12L16 9H24L30 14L31 21L27 27L18 29L10 26Z" fill="#3a4260" />
    <ellipse cx="19" cy="18" rx="11" ry="9" fill="#22a8a4" />
    <ellipse cx="19" cy="18" rx="7" ry="6" fill="#0f7c84" stroke="#b8d858" strokeWidth="1.500" strokeDasharray="5 2" />
    <circle cx="19" cy="17" r="3.500" fill="#123" stroke="#ecd850" strokeWidth="2" />
    <path d="M2 4L8 3L12 8L17 6L15 11L8 13L3 9Z" fill="#2fd0bc" />
    <path d="M8 17l4 4M24 26l4-3M13 25l5 2" stroke="#7ff0e0" strokeWidth="1.500" />
  </g>
);

const APPS: { name: string; art: React.ReactNode; stack?: boolean; active?: boolean }[] = [
  { name: "Files", art: <g><path d="M16 31Q2 24 1 15Q2 7 7 6Q9 2 16 2Q23 2 25 6Q31 8 31 15Q30 24 16 31Z" fill="#f3d48c" /><path d="M16 30L5 9M16 30L10 4M16 30V3M16 30L22 4M16 30L28 9" stroke="#c9974a" /><path d="M20 11l3 6l7 1l-5 5l2 7l-7-3l-6 4l1-7l-5-5l7-1z" fill="#e8792a" stroke="#b4521a" /></g> },
  { name: "Notes", art: <g><rect x="5" y="2" width="23" height="29" rx="1" fill="#e8f6ff" stroke="#8ab" /><path d="M8 6H25M8 10H25M8 14H25M8 18H25M8 22H25M8 26H25" stroke="#2a8fc4" strokeWidth="2" /></g> },
  { name: "G tool", art: <path d="M27 1Q25 9 14 11Q9 15 10 22Q12 27 18 25L20 20L14 19L16 15H27L24 26Q16 33 8 30Q1 26 4 15Q8 5 19 5Q24 4 27 1Z" fill="#d42418" stroke="#8c140c" /> },
  { name: "Messenger", art: <g><rect x="2" y="2" width="29" height="29" rx="6" fill="#1296f0" /><path d="M11 6Q12 12 17 15Q22 18 22 23Q21 26 16 29L17 25Q10 22 11 18Q9 12 11 6Z" fill="#fff" /></g> },
  { name: "Save", art: <g><path d="M2 0H29L32 3V31H2Z" fill="#2438c8" /><rect x="9" y="0" width="15" height="11" fill="#c8ccd4" /><rect x="17" y="1" width="4" height="9" fill="#223" /><rect x="5" y="14" width="24" height="17" fill="#fff" /><path d="M7 18H27M7 22H27M7 26H17" stroke="#c33" /><text x="18" y="30" fontSize="8" fontFamily="Liberation Sans" fill="#222">64</text></g> },
  { name: "P tool", art: <g><path d="M5 2H21V12H5ZM13 12V30" fill="none" stroke="#0d7030" /><path d="M9 11Q18 5 27 10Q31 18 25 23Q21 26 16 24V31H11Q12 22 9 19Z" fill="#159a40" /></g> },
  { name: "Spreadsheet", art: <g transform="translate(-2 0)"><path d="M4 4Q12 1 27 2L26 22L14 24L3 25Z" fill="#f4faf0" stroke="#8a9" /><rect x="14" y="11" width="18" height="19" fill="#e8f4e0" stroke="#4a8a3a" /><path d="M14 17H32M14 23H32M20 11V30M26 11V30" stroke="#5ca04a" strokeWidth="2" /><path d="M5 6H20V24H5Z" fill="#f4faf0" /><path d="M7 8L18 22M18 8L7 22" stroke="#2a7a2a" strokeWidth="4" /></g>, stack: true },
  { name: "Genesis", art: <Gear /> },
  { name: "X server", art: <g transform="translate(-1 0)"><path d="M4 2H11L30 30H23Z" fill="#7a1090" stroke="#eee" /><path d="M26 2H29L9 30H4Z" fill="#7a1090" stroke="#eee" /></g>, stack: true, active: true },
  { name: "Genesis editor", art: <Gear /> },
];

function Taskbar() {
  return (
    <footer className="flex h-10 shrink-0 items-stretch border-t border-[#7f93ad] bg-linear-to-r from-[#0e2748] via-[#153a6a] via-40% to-[#0c2444]">
      <button aria-label="Start" className="flex w-[60px] shrink-0 items-center pl-2">
        <svg viewBox="0 0 38 38" className="size-[38px]">
          <circle cx="19" cy="19" r="18" fill="#2872a8" stroke="#0a1c38" strokeWidth="2" /><ellipse cx="19" cy="27" rx="13" ry="9" fill="#4cc8f0" opacity=".7" /><ellipse cx="19" cy="10" rx="14" ry="8" fill="#a8c4d8" opacity=".6" />
          <path d="M10 12Q14 9 18 11L17 18Q13 16 8 19Z" fill="#f0622a" /><path d="M20 12Q24 14 29 11L27 18Q23 21 19 18Z" fill="#8cc83c" />
          <path d="M8 21Q12 18 16 20L15 27Q11 25 7 28Z" fill="#3a9ae8" /><path d="M18 21Q22 23 26 20L25 27Q21 30 17 27Z" fill="#fcc83a" />
        </svg>
      </button>
      <div className="flex flex-1 gap-1 py-px">
        {APPS.map((a) => (
          <button key={a.name} aria-label={a.name} className="flex w-[58px]">
            <span className={`flex h-full flex-1 items-center justify-center rounded-sm border ${a.active ? "border-[#c8d0e0] bg-linear-to-br from-[#f0f0f8] to-[#8088a8]" : "border-[#5f7ba0] bg-linear-to-br from-[#7c8fae] via-[#2f4c78] to-[#1c3b68]"}`}>
              <svg viewBox="0 0 33 32" className="h-8 w-[33px]">{a.art}</svg>
            </span>
            {a.stack && <span className="h-full w-1 rounded-r-sm border border-l-0 border-[#8fa3c0]" />}
          </button>
        ))}
      </div>
      <div className="flex items-center text-white">
        <svg viewBox="0 0 193 40" className="h-10 w-[193px]" aria-label="Notification icons">
          <path d="M9 12Q12 8 16 11T20 8" stroke="#ccc" fill="none" /><rect x="4.500" y="14.500" width="15" height="9" rx="1" fill="#bbb" stroke="#eee" /><path d="M6 17h12M6 19h12M8 21.500h8" stroke="#555" strokeDasharray="1.500 1" />
          <circle cx="34" cy="17" r="7" fill="#1c2cc8" stroke="#b8c4f0" /><text x="34" y="21" textAnchor="middle" fontSize="12" fontWeight="bold" fill="#fff" fontFamily="Liberation Sans">?</text>
          <path d="M54.500 8.500h5v4h-5zM52 11.500v3h5v-2" fill="none" stroke="#fff" /><path d="M52 22h5l-2.500 3z" fill="#fff" />
          <path d="M71 23l4-4l4 4z" fill="#fff" />
          <path d="M101 14L104 19L99 27H91Z" fill="#e01818" /><path d="M104 19L107 27H102L100 24Z" fill="#18d838" />
          <path d="M122.500 13V28" stroke="#fff" /><path d="M123 14h12v9h-12z" fill="#f0f0f0" /><circle cx="132" cy="23" r="5" fill="#d82818" /><path d="M130 21l4 4M134 21l-4 4" stroke="#fff" strokeWidth="1.500" />
          <path d="M145 18h3l5-4v14l-5-4h-3z" fill="#fff" /><path d="M154.500 18q2 3 0 6M157 16q3 5 0 10" stroke="#fff" fill="none" />
          <rect x="173.500" y="16.500" width="10" height="8" fill="#123" stroke="#fff" strokeWidth="1.500" /><path d="M176 27.500h8M169.500 14v5h4v-5M171.500 19v6" stroke="#fff" fill="none" strokeWidth="1.500" />
        </svg>
        <div className="w-[76px] text-center font-['Open_Sans',sans-serif] text-xs leading-[18px]">16:53<br />2023/9/19</div>
        <button aria-label="Show desktop" className="h-full w-3.5 border border-[#5f7ba0] bg-linear-to-b from-[#4a6488] to-[#1a3458]" />
      </div>
    </footer>
  );
}

export default function App() {
  return (
    <div className="flex h-screen flex-col overflow-hidden bg-[#a9c0e8]">
      <TitleBar />
      <div className="flex min-h-0 flex-1 flex-col border-r-8 border-b-8 border-r-[#b0c8f0] border-b-[#a3b9e4] text-black">
        <Header />
        <main className="flex min-h-0 flex-1 bg-black">
          <Sidebar />
          <div className="relative min-w-0 flex-1">
            <div className="h-full overflow-hidden"><BoardCanvas /></div>
            <Popview />
          </div>
          <RightPanel />
        </main>
        <CommandRow />
        <StatusBar />
      </div>
      <Taskbar />
    </div>
  );
}
